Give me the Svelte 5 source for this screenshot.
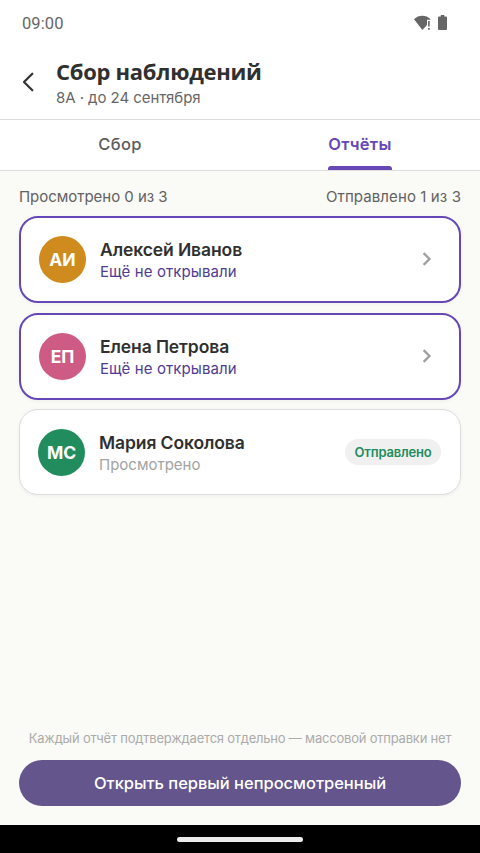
<script lang="ts">
  interface Report {
    initials: string;
    name: string;
    status: string;
    tone: 'amber' | 'pink' | 'green';
    sent: boolean;
  }

  const reports: Report[] = [
    { initials: 'АИ', name: 'Алексей Иванов', status: 'Ещё не открывали', tone: 'amber', sent: false },
    { initials: 'ЕП', name: 'Елена Петрова', status: 'Ещё не открывали', tone: 'pink', sent: false },
    { initials: 'МС', name: 'Мария Соколова', status: 'Просмотрено', tone: 'green', sent: true },
  ];

  let activeTab = $state('reports');
  const sentCount = $derived(reports.filter((r) => r.sent).length);
</script>

<div class="screen">
  <div class="status-bar">
    <span class="clock">09:00</span>
    <div class="status-icons">
      <svg width="18" height="16" viewBox="0 0 18 16" aria-hidden="true">
        <path d="M0 4.2C4.6 -.3 12 -.3 16.6 4.2L16.2 4.7H13V10L8.4 15Z" fill="#666" />
        <path d="M14.1 6h1.6v5.5h-1.6zM14.1 13h1.6v1.7h-1.6z" fill="#666" />
      </svg>
      <svg width="9" height="15" viewBox="0 0 9 15" aria-hidden="true">
        <path d="M2.8 0h3.5v1.5H8q1 0 1 1V14q0 1-1 1H1q-1 0-1-1V2.5q0-1 1-1h1.8z" fill="#666" />
      </svg>
    </div>
  </div>

  <header class="header">
    <button class="back" aria-label="Назад">
      <svg width="12" height="20" viewBox="0 0 12 20" fill="none" aria-hidden="true">
        <path d="M10.3 1.7 2 10l8.3 8.3" stroke="#333" stroke-width="2.2" stroke-linecap="round" stroke-linejoin="round" />
      </svg>
    </button>
    <div class="heading">
      <h1 class="title">Сбор наблюдений</h1>
      <p class="subtitle">8А · до 24 сентября</p>
    </div>
  </header>

  <nav class="tabs">
    <button class="tab" class:active={activeTab === 'collect'} onclick={() => (activeTab = 'collect')}>
      <span class="tab-label">Сбор</span>
      <span class="indicator"></span>
    </button>
    <button class="tab" class:active={activeTab === 'reports'} onclick={() => (activeTab = 'reports')}>
      <span class="tab-label">Отчёты</span>
      <span class="indicator"></span>
    </button>
  </nav>

  <main class="content">
    <div class="summary">
      <span class="viewed">Просмотрено 0 из {reports.length}</span>
      <span class="sent">Отправлено {sentCount} из {reports.length}</span>
    </div>

    <ul class="reports">
      {#each reports as report}
        <li class="card" class:unread={!report.sent}>
          <div class="avatar {report.tone}">{report.initials}</div>
          <div class="info">
            <span class="name">{report.name}</span>
            <span class="status">{report.status}</span>
          </div>
          {#if report.sent}
            <span class="badge">Отправлено</span>
          {:else}
            <svg class="chevron" width="10" height="14" viewBox="0 0 10 14" fill="none" aria-hidden="true">
              <path d="M1.6 1.1 7.5 7l-5.9 5.9" stroke="#9e9e9e" stroke-width="2.2" />
            </svg>
          {/if}
        </li>
      {/each}
    </ul>

    <div class="bottom">
      <p class="hint">Каждый отчёт подтверждается отдельно — массовой отправки нет</p>
      <button class="primary">Открыть первый непросмотренный</button>
    </div>
  </main>

  <div class="nav-bar"><span></span></div>
</div>

<style>
  :global(body) {
    margin: 0;
  }

  .screen {
    display: flex;
    flex-direction: column;
    height: 100vh;
    overflow: hidden;
    background: #fff;
    color: #303030;
    font-family: Inter, Roboto, sans-serif;
    white-space: nowrap;
  }

  .screen * {
    box-sizing: border-box;
  }

  button {
    margin: 0;
    padding: 0;
    border: none;
    background: none;
    font: inherit;
    color: inherit;
    cursor: pointer;
  }

  h1, p, ul {
    margin: 0;
    padding: 0;
  }

  .status-bar {
    display: flex;
    justify-content: space-between;
    align-items: center;
    height: 47px;
    padding: 0 33px 0 22px;
    flex-shrink: 0;
  }

  .clock {
    font-family: Roboto, sans-serif;
    font-size: 16.5px;
    letter-spacing: 0.1px;
    color: #666;
  }

  .status-icons {
    display: flex;
    align-items: center;
    gap: 6px;
    padding-bottom: 2px;
  }

  .status-icons svg,
  .back svg,
  .chevron {
    display: block;
  }

  .header {
    display: flex;
    align-items: center;
    gap: 22px;
    height: 73px;
    padding: 0 22px 3px;
    border-bottom: 1px solid #ddd;
    flex-shrink: 0;
  }

  .heading {
    padding-top: 2px;
  }

  .title {
    font-family: "Open Sans", sans-serif;
    font-size: 22px;
    line-height: 30px;
    font-weight: 700;
    letter-spacing: -0.28px;
    color: #303030;
  }

  .subtitle {
    padding-top: 1px;
    font-size: 15px;
    line-height: 22px;
    letter-spacing: -0.06px;
    color: #666;
  }

  .tabs {
    display: grid;
    grid-template-columns: 1fr 1fr;
    height: 51px;
    border-bottom: 1px solid #ddd;
    flex-shrink: 0;
  }

  .tab {
    display: grid;
    grid-template-rows: 1fr 4px;
    justify-content: center;
    font-size: 16.5px;
    font-weight: 500;
    letter-spacing: 0.3px;
    color: #5c5c5c;
  }

  .tab-label {
    align-self: center;
    padding-top: 2px;
  }

  .tab.active {
    font-weight: 600;
    color: #6548b5;
  }

  .indicator {
    border-radius: 3px 3px 0 0;
  }

  .tab.active .indicator {
    background: #6548b5;
  }

  .content {
    display: flex;
    flex-direction: column;
    flex: 1;
    padding: 15px 19px 19px;
    background: #fafaf6;
  }

  .summary {
    display: flex;
    justify-content: space-between;
    font-size: 15px;
    line-height: 22px;
    color: #626262;
  }

  .viewed {
    letter-spacing: -0.03px;
  }

  .sent {
    letter-spacing: 0.1px;
  }

  .reports {
    display: flex;
    flex-direction: column;
    gap: 9.9px;
    padding-top: 7.7px;
    list-style: none;
  }

  .card {
    display: flex;
    align-items: center;
    gap: 14px;
    height: 86px;
    padding: 0 19px 0 18px;
    border: 1px solid #ddd;
    border-radius: 19px;
    background: #fff;
    box-shadow: 0 1px 4px rgba(0, 0, 0, 0.05);
  }

  .card.unread {
    height: 87px;
    padding: 0 27px 0 18px;
    border: 2px solid #6548b5;
  }

  .avatar {
    display: flex;
    align-items: center;
    justify-content: center;
    width: 47px;
    height: 47px;
    border-radius: 50%;
    font-size: 17.5px;
    font-weight: 700;
    color: #fff;
  }

  .avatar.amber { background: #cf8b1e; }
  .avatar.pink { background: #cd5b83; }
  .avatar.green { background: #218c5e; }

  .info {
    display: flex;
    flex-direction: column;
    flex: 1;
    padding-top: 2px;
  }

  .name {
    font-size: 17.5px;
    line-height: 23px;
    font-weight: 600;
    letter-spacing: -0.1px;
  }

  .status {
    font-size: 15px;
    line-height: 22px;
    color: #a3a3a3;
  }

  .unread .status {
    letter-spacing: 0.1px;
    color: #4f3b91;
  }

  .badge {
    display: flex;
    align-items: center;
    justify-content: center;
    width: 96px;
    height: 26px;
    border-radius: 13px;
    background: #f0f0f0;
    font-size: 13px;
    font-weight: 600;
    letter-spacing: -0.2px;
    color: #218c5e;
  }

  .bottom {
    margin-top: auto;
  }

  .hint {
    font-size: 13px;
    line-height: 18px;
    letter-spacing: -0.21px;
    text-align: center;
    color: #ababab;
  }

  .primary {
    display: block;
    width: 100%;
    height: 46.5px;
    margin-top: 13px;
    border-radius: 24px;
    background: #64558d;
    font-size: 16.5px;
    font-weight: 500;
    letter-spacing: -0.03px;
    color: #fff;
  }

  .nav-bar {
    display: flex;
    align-items: center;
    justify-content: center;
    height: 28px;
    background: #000;
    flex-shrink: 0;
  }

  .nav-bar span {
    width: 126px;
    height: 5px;
    border-radius: 3px;
    background: #ebebeb;
  }
</style>
